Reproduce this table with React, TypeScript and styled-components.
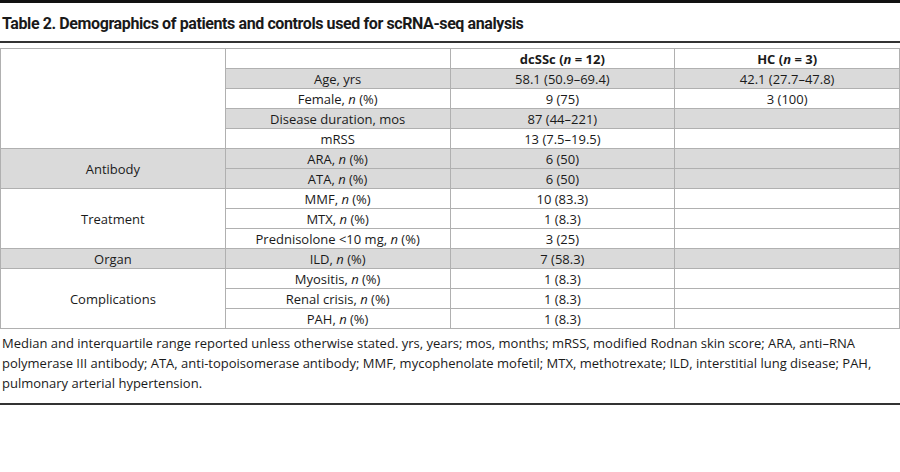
import React from "react";
import styled, { createGlobalStyle } from "styled-components";

const Global = createGlobalStyle`
  html, body { margin: 0; padding: 0; background: #fff; }
  body { font-family: "Open Sans", "Liberation Sans", sans-serif; color: #1a1a1a; }
`;

const Page = styled.div`
  width: 900px;
  border-top: 3px solid #111;
`;

const Title = styled.h2`
  margin: 0;
  padding: 11px 0 0 2px;
  height: 27px;
  box-sizing: content-box;
  font-family: Roboto, "Open Sans", sans-serif;
  font-size: 16px;
  font-weight: 700;
  line-height: 20px;
  border-bottom: 2px solid #333;
  letter-spacing: -0.4px;
`;

const Table = styled.table`
  margin-top: 5px;
  width: 900px;
  border-collapse: collapse;
  table-layout: fixed;
  font-size: 13px;
`;

const Cell = styled.td<{ $shade?: boolean; $bold?: boolean }>`
  height: 20px;
  box-sizing: border-box;
  padding: 0;
  line-height: 18px;
  text-align: center;
  vertical-align: middle;
  border: 1px solid #b0b0b0;
  background: ${(p) => (p.$shade ? "#dadada" : "#fff")};
  font-weight: ${(p) => (p.$bold ? 700 : 400)};
  white-space: nowrap;
`;

const Footnote = styled.p`
  margin: 0;
  padding: 4px 0 10px 2px;
  font-size: 13px;
  line-height: 20px;
  border-bottom: 2px solid #333;
  width: 900px;
  box-sizing: border-box;
`;

type Row = {
  group?: { label: string; span: number; shade: boolean };
  label: React.ReactNode;
  a: string;
  b: string;
  shade: boolean;
};

const N = () => <i>n</i>;

const rows: Row[] = [
  { label: "Age, yrs", a: "58.1 (50.9–69.4)", b: "42.1 (27.7–47.8)", shade: true },
  { label: <>Female, <N /> (%)</>, a: "9 (75)", b: "3 (100)", shade: false },
  { label: "Disease duration, mos", a: "87 (44–221)", b: "", shade: true },
  { label: "mRSS", a: "13 (7.5–19.5)", b: "", shade: false },
  { group: { label: "Antibody", span: 2, shade: true }, label: <>ARA, <N /> (%)</>, a: "6 (50)", b: "", shade: true },
  { label: <>ATA, <N /> (%)</>, a: "6 (50)", b: "", shade: true },
  { group: { label: "Treatment", span: 3, shade: false }, label: <>MMF, <N /> (%)</>, a: "10 (83.3)", b: "", shade: false },
  { label: <>MTX, <N /> (%)</>, a: "1 (8.3)", b: "", shade: false },
  { label: <>Prednisolone &lt;10 mg, <N /> (%)</>, a: "3 (25)", b: "", shade: false },
  { group: { label: "Organ", span: 1, shade: true }, label: <>ILD, <N /> (%)</>, a: "7 (58.3)", b: "", shade: true },
  { group: { label: "Complications", span: 3, shade: false }, label: <>Myositis, <N /> (%)</>, a: "1 (8.3)", b: "", shade: false },
  { label: <>Renal crisis, <N /> (%)</>, a: "1 (8.3)", b: "", shade: false },
  { label: <>PAH, <N /> (%)</>, a: "1 (8.3)", b: "", shade: false },
];

export default function App() {
  return (
    <Page>
      <Global />
      <Title>Table 2. Demographics of patients and controls used for scRNA-seq analysis</Title>
      <Table>
        <tbody>
          <tr>
            <Cell rowSpan={5} />
            <Cell />
            <Cell $bold>dcSSc (<i>n</i> = 12)</Cell>
            <Cell $bold>HC (<i>n</i> = 3)</Cell>
          </tr>
          {rows.map((r, i) => (
            <tr key={i}>
              {r.group && (
                <Cell rowSpan={r.group.span} $shade={r.group.shade}>
                  {r.group.label}
                </Cell>
              )}
              <Cell $shade={r.shade}>{r.label}</Cell>
              <Cell $shade={r.shade}>{r.a}</Cell>
              <Cell $shade={r.shade}>{r.b}</Cell>
            </tr>
          ))}
        </tbody>
      </Table>
      <Footnote>
        Median and interquartile range reported unless otherwise stated. yrs, years; mos, months; mRSS, modified Rodnan skin score; ARA, anti–RNA polymerase III antibody; ATA, anti-topoisomerase antibody; MMF, mycophenolate mofetil; MTX, methotrexate; ILD, interstitial lung disease; PAH, pulmonary arterial hypertension.
      </Footnote>
    </Page>
  );
}
